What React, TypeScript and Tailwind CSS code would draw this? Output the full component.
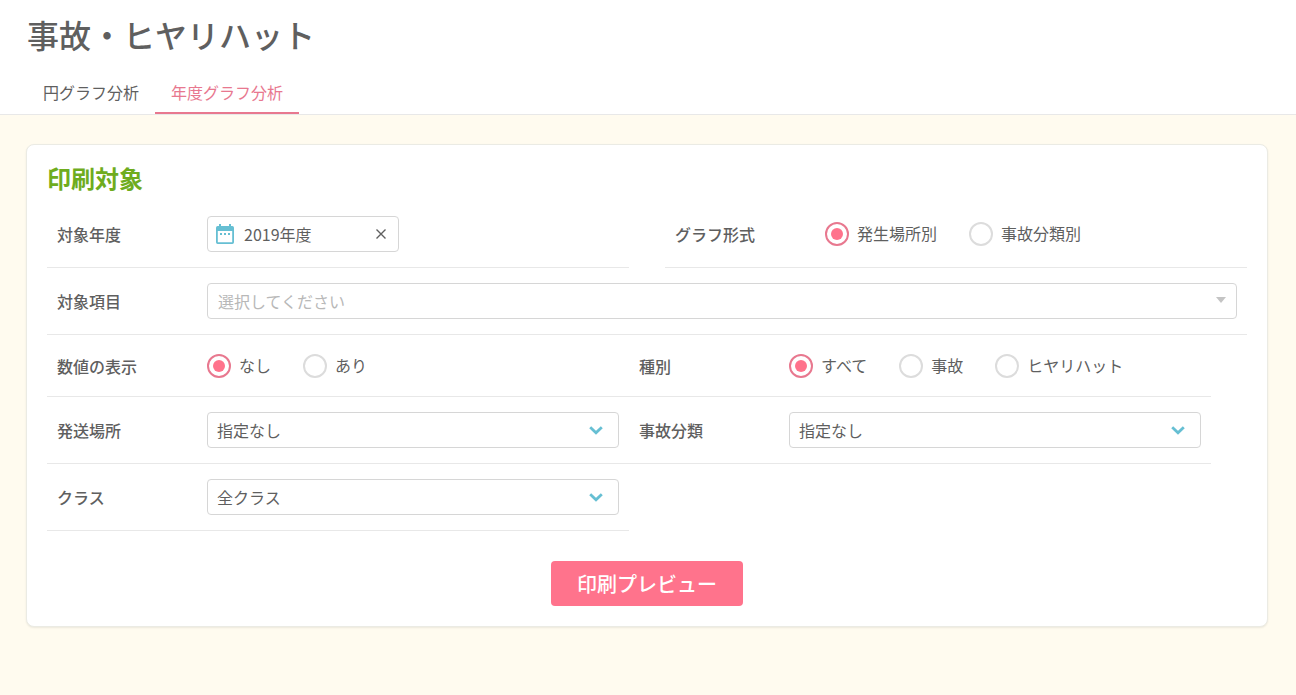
import { useState } from "react";
import type { ReactNode } from "react";

const tabs = ["円グラフ分析", "年度グラフ分析"];

function CalendarIcon() {
  return (
    <svg viewBox="0 0 18 20" className="pointer-events-none h-5 w-[18px] shrink-0 fill-[#66bfd3]" aria-hidden="true">
      <path
        fillRule="evenodd"
        d="M3 0h2v2h8V0h2v2h1.300A1.700 1.700 0 0 1 18 3.700v14.600a1.700 1.700 0 0 1-1.700 1.700H1.700A1.700 1.700 0 0 1 0 18.300V3.700A1.700 1.700 0 0 1 1.700 2H3zM1.800 7v11.200h14.400V7z"
      />
      <path d="M4 9h2v2H4zM8 9h2v2H8zM12 9h2v2h-2z" />
    </svg>
  );
}

function Field({ label, htmlFor, wide, children }: { label: string; htmlFor?: string; wide?: boolean; children: ReactNode }) {
  return (
    <div className={`flex items-center border-b border-[#e8e8e8] px-2.5 ${wide ? "w-full" : "w-[48.5%]"}`}>
      <label htmlFor={htmlFor} className="w-[150px] shrink-0 font-medium">
        {label}
      </label>
      <div className="min-w-0 flex-1 py-[15px]">{children}</div>
    </div>
  );
}

function RadioGroup({ name, options }: { name: string; options: string[] }) {
  const [value, setValue] = useState(options[0]);
  return (
    <div role="radiogroup" aria-label={name} className="flex items-center gap-8">
      {options.map((o) => (
        <label key={o} className="flex items-center gap-2 whitespace-nowrap">
          <input
            type="radio"
            name={name}
            checked={value === o}
            onChange={() => setValue(o)}
            className="grid h-6 w-6 appearance-none place-items-center rounded-full border-2 border-[#dcdcdc] bg-white before:h-3 before:w-3 before:rounded-full checked:border-[#e8788f] checked:before:bg-[#ff738c]"
          />
          <span className="pb-0.5 leading-6">{o}</span>
        </label>
      ))}
    </div>
  );
}

function Select({ id, options }: { id: string; options: string[] }) {
  return (
    <div className="relative">
      <select id={id} className="block h-9 w-full appearance-none rounded border border-[#d6d6d6] bg-white pr-9 pl-[9px]">
        {options.map((o) => (
          <option key={o}>{o}</option>
        ))}
      </select>
      <svg
        viewBox="0 0 14 9"
        className="pointer-events-none absolute top-3.5 right-4 h-[9px] w-3.5 fill-none stroke-[#66bfd3] stroke-[2.8]"
        aria-hidden="true"
      >
        <path d="M1.200 1.300 7 6.800l5.800-5.500" />
      </svg>
    </div>
  );
}

export default function App() {
  const [activeTab, setActiveTab] = useState(tabs[1]);
  const [year, setYear] = useState("2019年度");

  return (
    <div className="min-h-screen bg-[#fffbef] font-['Noto_Sans_CJK_JP','Noto_Sans',sans-serif] text-base text-[#5f5f5f]">
      <header className="border-b border-[#e8e8e8] bg-white px-[27px]">
        <h1 className="pt-2.5 pb-3.5 text-[32px] leading-12 font-medium">事故・ヒヤリハット</h1>
        <nav className="flex">
          {tabs.map((t) => (
            <button
              key={t}
              onClick={() => setActiveTab(t)}
              className={`h-[42px] border-b-2 px-4 ${
                t === activeTab ? "border-[#e8788f] text-[#e8788f]" : "border-transparent"
              }`}
            >
              {t}
            </button>
          ))}
        </nav>
      </header>

      <main className="pt-[29px] pr-7 pb-10 pl-[26px]">
        <form
          onSubmit={(e) => e.preventDefault()}
          className="rounded-lg border border-[#ebebe4] bg-white p-5 shadow-[0_1px_2px_rgba(0,0,0,0.08)]"
        >
          <h2 className="mb-2.5 text-2xl leading-[26px] font-bold text-[#6fac1e]">印刷対象</h2>

          <div className="flex justify-between">
            <Field label="対象年度" htmlFor="year">
              <div className="flex h-9 w-48 items-center gap-2.5 rounded border border-[#d6d6d6] px-2">
                <CalendarIcon />
                <input
                  id="year"
                  type="text"
                  value={year}
                  onChange={(e) => setYear(e.target.value)}
                  className="min-w-0 flex-1 outline-none"
                />
                <button type="button" aria-label="クリア" onClick={() => setYear("")} className="p-1">
                  <svg viewBox="0 0 10 10" className="h-2.5 w-2.5 stroke-[#5f5f5f] stroke-[1.4]" aria-hidden="true">
                    <path d="m.5.5 9 9m0-9-9 9" />
                  </svg>
                </button>
              </div>
            </Field>
            <Field label="グラフ形式">
              <RadioGroup name="グラフ形式" options={["発生場所別", "事故分類別"]} />
            </Field>
          </div>

          <Field label="対象項目" htmlFor="item" wide>
            <div className="relative">
              <select
                id="item"
                className="block h-9 w-full appearance-none rounded border border-[#d6d6d6] bg-white pr-9 pl-2.5 text-[#b8b8b8]"
              >
                <option>選択してください</option>
              </select>
              <svg
                viewBox="0 0 10 6"
                className="pointer-events-none absolute top-3.5 right-[11px] h-1.5 w-2.5 fill-[#c4c4c4]"
                aria-hidden="true"
              >
                <path d="M0 0h10L5 6z" />
              </svg>
            </div>
          </Field>

          <div className="flex h-[62px]">
            <Field label="数値の表示">
              <RadioGroup name="数値の表示" options={["なし", "あり"]} />
            </Field>
            <Field label="種別">
              <RadioGroup name="種別" options={["すべて", "事故", "ヒヤリハット"]} />
            </Field>
          </div>

          <div className="flex">
            <Field label="発送場所" htmlFor="place">
              <Select id="place" options={["指定なし"]} />
            </Field>
            <Field label="事故分類" htmlFor="category">
              <Select id="category" options={["指定なし"]} />
            </Field>
          </div>

          <Field label="クラス" htmlFor="class">
            <Select id="class" options={["全クラス"]} />
          </Field>

          <div className="mt-[30px] flex justify-center">
            <button className="h-[45px] w-48 rounded bg-[#ff738c] text-xl font-medium text-white">
              印刷プレビュー
            </button>
          </div>
        </form>
      </main>
    </div>
  );
}
